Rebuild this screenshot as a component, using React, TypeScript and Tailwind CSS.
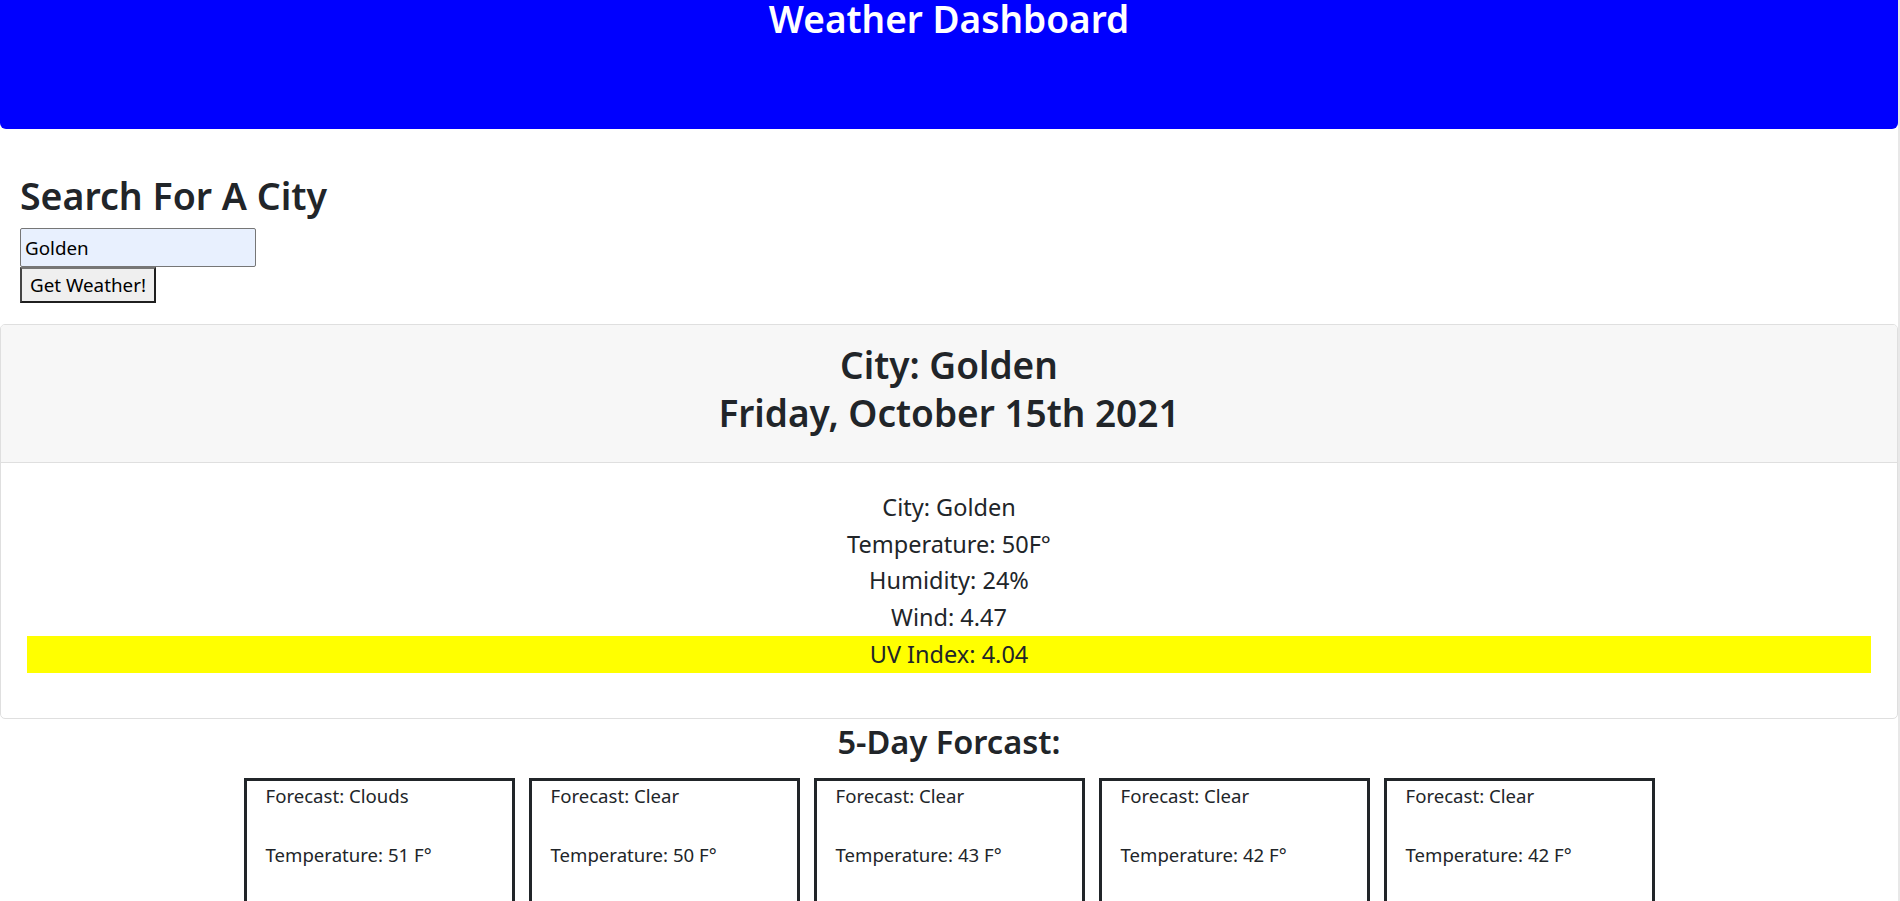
import React from 'react';

const forecast = [
  { kind: 'Clouds', temp: 51 },
  { kind: 'Clear', temp: 50 },
  { kind: 'Clear', temp: 43 },
  { kind: 'Clear', temp: 42 },
  { kind: 'Clear', temp: 42 },
];

function ForecastCard({ kind, temp }: { kind: string; temp: number }) {
  return (
    <div className="w-[271px] h-[160px] shrink-0 border-[3px] border-[#212529] pl-[19px] pt-[1px] text-[18.6px] leading-[28px]">
      <p>Forecast: {kind}</p>
      <p className="mt-[31px]">Temperature: {temp} F°</p>
    </div>
  );
}

export default function App() {
  return (
    <div
      className="h-screen overflow-hidden bg-white text-[#212529] border-r-2 border-[#e8e8e8]"
      style={{ fontFamily: '"Noto Sans", "Open Sans", sans-serif' }}
    >
      {/* Top banner */}
      <header className="h-[130px] bg-[#0000ff] rounded-b-[6px] text-center">
        <h1 className="text-[37px] leading-[40px] -mt-[1px] font-semibold text-white">Weather Dashboard</h1>
      </header>

      {/* Search */}
      <section className="px-[20px] pt-[44px] pb-[21px]">
        <h2 className="text-[37.5px] leading-[45px] font-semibold">Search For A City</h2>
        <div className="mt-[10px] flex flex-col items-start">
          <input
            defaultValue="Golden"
            className="w-[236px] h-[39px] bg-[#e8f0fe] border border-[#767676] rounded-[2px] px-[4px] text-[18.8px] text-black outline-none"
          />
          <button className="h-[36px] px-[8px] bg-[#efefef] border-2 border-[#1f1f1f] border-t-[#767676] border-l-[#444] text-[18.8px] text-black leading-none">
            Get Weather!
          </button>
        </div>
      </section>

      {/* Current conditions */}
      <div className="border border-[#dfdfdf] rounded-[5px] overflow-hidden">
        <div className="bg-[#f7f7f7] border-b border-[#dfdfdf] pt-[16px] pb-[16px] text-center">
          <h2 className="text-[37px] leading-[48px] font-semibold mb-[9px]">
            City: Golden
            <br />
            Friday, October 15th 2021
          </h2>
        </div>
        <div className="px-[26px] pt-[26px] pb-[45px] text-center text-[23.5px] leading-[36.7px]">
          <p>City: Golden</p>
          <p>Temperature: 50F°</p>
          <p>Humidity: 24%</p>
          <p>Wind: 4.47</p>
          <p className="bg-[#ffff00]">UV Index: 4.04</p>
        </div>
      </div>

      {/* 5 day */}
      <h2 className="mt-[3px] text-center text-[32.6px] leading-[39px] font-semibold">5-Day Forcast:</h2>
      <div className="mt-[17px] flex justify-center gap-[14px]">
        {forecast.map((f, i) => (
          <ForecastCard key={i} kind={f.kind} temp={f.temp} />
        ))}
      </div>
    </div>
  );
}
